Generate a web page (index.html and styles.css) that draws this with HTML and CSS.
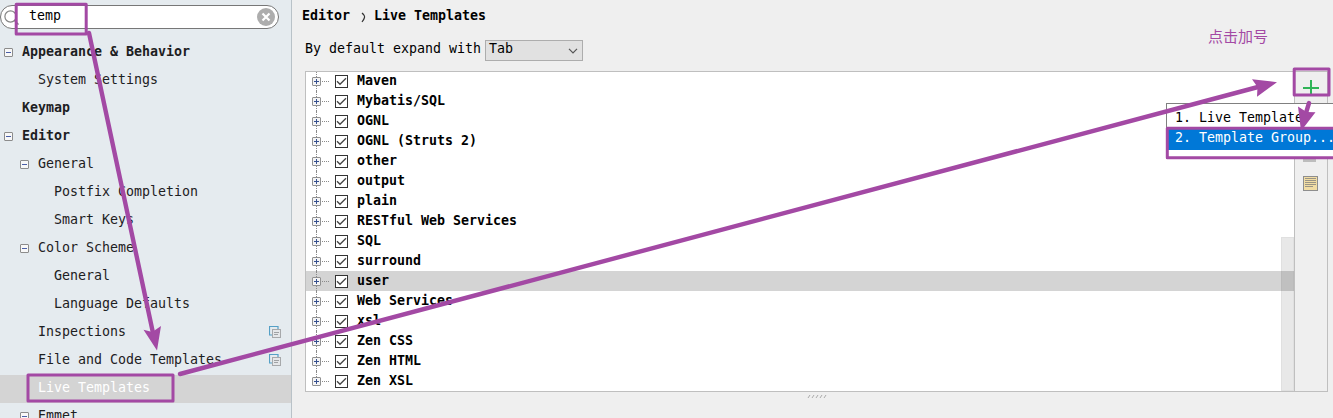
FILE: index.html
```html
<!DOCTYPE html>
<html lang="en">
<head>
<meta charset="utf-8">
<title>Live Templates</title>
<link rel="stylesheet" href="styles.css">
</head>
<body>
<svg class="defs" width="0" height="0">
  <symbol id="minus" viewBox="0 0 9 9"><rect x=".5" y=".5" width="8" height="8" rx=".5" fill="#f8f8f8" stroke="#8c8c8c"/><path d="M2 4.5h5" stroke="#4a5fa8"/></symbol>
  <symbol id="plus" viewBox="0 0 9 9"><rect x=".5" y=".5" width="8" height="8" rx=".5" fill="#f4f4f4" stroke="#919191"/><path d="M2 4.5h5M4.5 2v5" stroke="#354f8e"/></symbol>
  <symbol id="check" viewBox="0 0 13 13"><rect x=".5" y=".5" width="12" height="12" fill="#fff" stroke="#333"/><path d="M2 6.3l3 3 6-6" fill="none" stroke="#444" stroke-width="1.3"/></symbol>
  <symbol id="copy" viewBox="0 0 12 12"><path d="M3 9H.5V.5H9V3" fill="none" stroke="#55a0c6" stroke-width="1.2"/><rect x="3.5" y="3.5" width="8" height="8" fill="#e5e7e9" stroke="#a7a9ab"/><path d="M5 6.5h5M5 8.5h4" stroke="#a0a2a4"/></symbol>
</svg>
<div class="window">
  <aside class="sidebar">
    <div class="search">
      <svg class="lens" width="15" height="17" viewBox="0 0 15 17"><circle cx="6.5" cy="7.5" r="5.6" fill="none" stroke="#858585" stroke-width="1.2"/><path d="M10.5 11.5l4 4" stroke="#777" stroke-width="1.3"/></svg>
      <span class="query">temp</span>
      <svg class="clear" width="18" height="18" viewBox="0 0 18 18"><circle cx="9" cy="9" r="9" fill="#adadad"/><path d="M5.5 5.5l7 7M12.5 5.5l-7 7" stroke="#fff" stroke-width="2.2"/></svg>
    </div>
    <nav class="nav">
      <div class="item bold"><svg class="toggle"><use href="#minus"/></svg>Appearance &amp; Behavior</div>
      <div class="item l1 leaf">System Settings</div>
      <div class="item bold leaf">Keymap</div>
      <div class="item bold"><svg class="toggle"><use href="#minus"/></svg>Editor</div>
      <div class="item l1"><svg class="toggle"><use href="#minus"/></svg>General</div>
      <div class="item l2 leaf">Postfix Completion</div>
      <div class="item l2 leaf">Smart Keys</div>
      <div class="item l1"><svg class="toggle"><use href="#minus"/></svg>Color Scheme</div>
      <div class="item l2 leaf">General</div>
      <div class="item l2 leaf">Language Defaults</div>
      <div class="item l1 leaf">Inspections<svg class="copy"><use href="#copy"/></svg></div>
      <div class="item l1 leaf">File and Code Templates<svg class="copy"><use href="#copy"/></svg></div>
      <div class="item l1 leaf selected">Live Templates</div>
      <div class="item l1"><svg class="toggle"><use href="#minus"/></svg>Emmet</div>
    </nav>
  </aside>
  <main class="content">
    <header class="crumbs"><span>Editor</span><svg width="5" height="11" viewBox="0 0 5 11"><path d="M1 1q3 2.5 2.5 4.5T1 10" fill="none" stroke="#333" stroke-width="1.2"/></svg><span>Live Templates</span></header>
    <div class="expand"><span>By default expand with</span>
      <div class="select">Tab<svg width="10" height="6" viewBox="0 0 10 6"><path d="M1 .8l4 4 4-4" fill="none" stroke="#555" stroke-width="1.2"/></svg></div>
    </div>
    <div class="panel">
      <div class="list">
        <div class="row"><svg class="toggle"><use href="#plus"/></svg><i></i><svg class="check"><use href="#check"/></svg>Maven</div>
        <div class="row"><svg class="toggle"><use href="#plus"/></svg><i></i><svg class="check"><use href="#check"/></svg>Mybatis/SQL</div>
        <div class="row"><svg class="toggle"><use href="#plus"/></svg><i></i><svg class="check"><use href="#check"/></svg>OGNL</div>
        <div class="row"><svg class="toggle"><use href="#plus"/></svg><i></i><svg class="check"><use href="#check"/></svg>OGNL (Struts 2)</div>
        <div class="row"><svg class="toggle"><use href="#plus"/></svg><i></i><svg class="check"><use href="#check"/></svg>other</div>
        <div class="row"><svg class="toggle"><use href="#plus"/></svg><i></i><svg class="check"><use href="#check"/></svg>output</div>
        <div class="row"><svg class="toggle"><use href="#plus"/></svg><i></i><svg class="check"><use href="#check"/></svg>plain</div>
        <div class="row"><svg class="toggle"><use href="#plus"/></svg><i></i><svg class="check"><use href="#check"/></svg>RESTful Web Services</div>
        <div class="row"><svg class="toggle"><use href="#plus"/></svg><i></i><svg class="check"><use href="#check"/></svg>SQL</div>
        <div class="row"><svg class="toggle"><use href="#plus"/></svg><i></i><svg class="check"><use href="#check"/></svg>surround</div>
        <div class="row current"><svg class="toggle"><use href="#plus"/></svg><i></i><svg class="check"><use href="#check"/></svg>user</div>
        <div class="row"><svg class="toggle"><use href="#plus"/></svg><i></i><svg class="check"><use href="#check"/></svg>Web Services</div>
        <div class="row"><svg class="toggle"><use href="#plus"/></svg><i></i><svg class="check"><use href="#check"/></svg>xsl</div>
        <div class="row"><svg class="toggle"><use href="#plus"/></svg><i></i><svg class="check"><use href="#check"/></svg>Zen CSS</div>
        <div class="row"><svg class="toggle"><use href="#plus"/></svg><i></i><svg class="check"><use href="#check"/></svg>Zen HTML</div>
        <div class="row last"><svg class="toggle"><use href="#plus"/></svg><i></i><svg class="check"><use href="#check"/></svg>Zen XSL</div>
        <div class="thumb"></div>
      </div>
      <div class="tools">
        <svg class="add" width="16" height="16" viewBox="0 0 16 16"><path d="M8 0v16M0 8h16" stroke="#2fb457" stroke-width="2"/></svg>
        <svg class="remove" width="13" height="3" viewBox="0 0 13 3"><path d="M0 1.5h13" stroke="#bdbdbd" stroke-width="3"/></svg>
        <svg class="note" width="15" height="15" viewBox="0 0 15 15"><rect x=".5" y=".5" width="14" height="14" fill="#f2dda4" stroke="#8e8e8e"/><path d="M2 2.5h11M2 4.5h11M2 6.5h11M2 8.5h11M2 10.5h8" stroke="#9b9585"/></svg>
      </div>
    </div>
    <svg class="grip" width="20" height="5" viewBox="0 0 20 5"><path d="M1 4l2-3M5 4l2-3M9 4l2-3M13 4l2-3M17 4l2-3" stroke="#aaa"/></svg>
  </main>
</div>
<div class="menu"><div class="option">1. Live Template</div><div class="option active">2. Template Group...</div></div>
<div class="note-text">点击加号</div>
<svg class="marks" width="1333" height="418" viewBox="0 0 1333 418">
  <g fill="none" stroke="#a349a4" stroke-width="3" stroke-linejoin="round">
    <rect x="16.2" y="4.3" width="70" height="29.7"/>
    <rect x="28" y="375" width="145" height="26"/>
    <rect x="1294.2" y="69" width="34.8" height="26"/>
    <rect x="1167.3" y="128.3" width="180" height="29.5"/>
  </g>
  <g fill="none" stroke="#a349a4" stroke-width="4.4" stroke-linecap="round">
    <path d="M89 33L153 333M180 374L1258 87M1309 103L1306 113"/>
  </g>
  <g fill="#a349a4">
    <path d="M157 350.5L143.5 329.7L152.3 332L161 326z"/>
    <path d="M1277 82.2L1252 79.2L1257.5 87L1257 96.7z"/>
    <path d="M1301 131L1298 106.5L1306.5 112L1315.5 112.2z"/>
  </g>
</svg>
</body>
</html>
```
FILE: styles.css
```css
* { box-sizing: border-box; }
body { margin: 0; width: 1333px; height: 418px; overflow: hidden; position: relative; background: #efefef; color: #000; font: 13.29px/20px "DejaVu Sans Mono", monospace; }
svg { display: block; flex: none; }
.defs { position: absolute; }
.window { display: flex; height: 418px; overflow: hidden; }
.sidebar { width: 292px; flex: none; background: #e5ebef; border-right: 1px solid #b9c2c8; padding-top: 5px; overflow: hidden; color: #1d2022; white-space: nowrap; }
.search { width: 279px; height: 24px; border: 1px solid #777; border-radius: 12px; background: #fff; display: flex; align-items: center; padding: 0 3px; color: #000; }
.query { margin-left: 10px; margin-top: -2px; flex: 1; }
.lens { margin-top: 1px; }
.nav { padding-top: 10px; }
.item { height: 28px; display: flex; align-items: center; padding: 0 10px 2px 4px; }
.item.l1 { padding-left: 20px; }
.item.l2 { padding-left: 36px; }
.leaf::before { content: ""; width: 18px; flex: none; }
.toggle { width: 9px; height: 9px; }
.item .toggle { margin: 1px 9px 0 0; }
.selected { background: #d4d4d4; color: #fff; }
.copy { width: 12px; height: 12px; margin: 0 0 0 auto; }
.bold, .crumbs, .row { font-weight: bold; }
.content { flex: 1; min-width: 0; white-space: nowrap; }
.crumbs { display: flex; align-items: center; height: 30px; padding: 2px 0 0 10px; }
.crumbs svg { margin: 3px 8px 0 11px; }
.expand { display: flex; align-items: center; height: 41px; padding: 0 0 2px 13px; }
.expand > span { margin-top: -1px; }
.select { width: 98px; height: 21px; margin: 2px 0 0 4px; border: 1px solid #adadad; background: #e1e1e1; display: flex; align-items: center; justify-content: space-between; padding: 0 4px 3px 3px; }
.select svg { margin-top: 3px; }
.panel { display: flex; width: 1023px; height: 321px; margin-left: 13px; border: 1px solid #bfbfbf; }
.list { width: 988px; flex: none; background: #fff; position: relative; height: 319px; overflow: hidden; }
.row { height: 20px; display: flex; align-items: center; padding-left: 6px; }
.row:first-child { margin-top: -1px; }
.row { position: relative; }
.row::before { content: ""; position: absolute; left: 10px; top: 0; height: 20px; border-left: 1px dotted #8a8a8a; }
.row.last::before { height: 10px; }
.row .toggle { position: relative; margin-top: 1px; }
.row i { width: 7px; margin: 1px 6px 0 1px; border-top: 1px dotted #8a8a8a; }
.check { width: 13px; height: 13px; margin: 1px 9px 0 0; }
.current { background: #d4d4d4; }
.thumb { position: absolute; right: 0; top: 165px; width: 13px; height: 154px; background: rgba(0,0,0,.09); border: 1px solid rgba(0,0,0,.03); }
.tools { flex: 1; border-left: 1px solid #bfbfbf; display: flex; flex-direction: column; align-items: center; padding-top: 8px; }
.remove { margin: 63px 4px 0 0; }
.note { margin: 14px 2px 0 0; }
.grip { margin: 2px 0 0 515px; }
.menu { position: absolute; left: 1166px; top: 103px; width: 167px; height: 56px; overflow: hidden; white-space: nowrap; border: 1px solid #808080; border-right: 0; background: #fff; padding-top: 4px; }
.option { height: 20px; padding-left: 8px; }
.active { height: 22px; background: #0078d7; color: #fff; }
.note-text { position: absolute; left: 1208px; top: 26px; font: 15px/20px "Noto Sans CJK SC", sans-serif; color: #a349a4; }
.marks { position: absolute; left: 0; top: 0; }
```
